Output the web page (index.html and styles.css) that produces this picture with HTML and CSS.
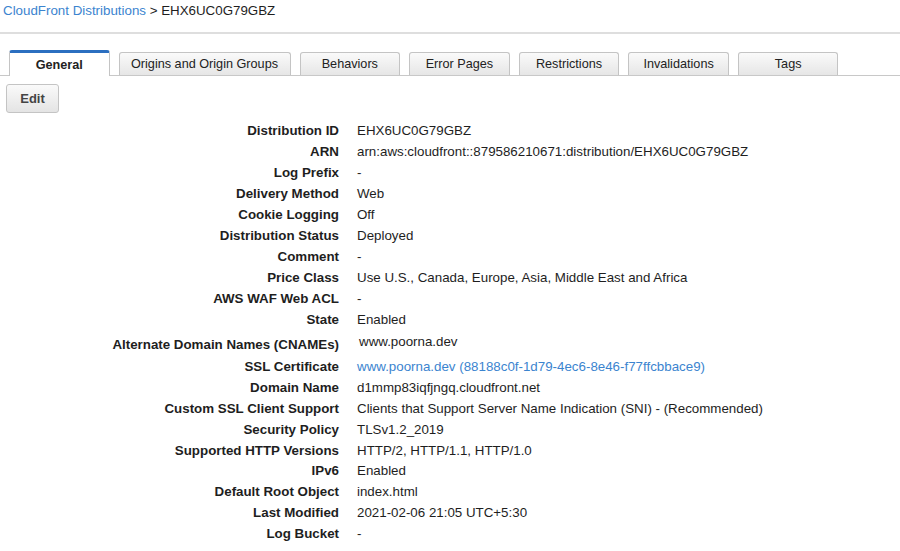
FILE: index.html
```html
<!DOCTYPE html>
<html>
<head>
<meta charset="utf-8">
<link rel="stylesheet" href="styles.css">
</head>
<body>
<div class="crumbs"><a class="link" href="#">CloudFront Distributions</a> &gt; EHX6UC0G79GBZ</div>
<div class="rule"></div>
<div class="tabs">
  <div class="tab active">General</div>
  <div class="tab wide">Origins and Origin Groups</div>
  <div class="tab">Behaviors</div>
  <div class="tab">Error Pages</div>
  <div class="tab">Restrictions</div>
  <div class="tab">Invalidations</div>
  <div class="tab">Tags</div>
</div>
<div class="toolbar"><button class="btn">Edit</button></div>
<div class="props">
  <div class="k">Distribution ID</div><div class="v">EHX6UC0G79GBZ</div>
  <div class="k">ARN</div><div class="v">arn:aws:cloudfront::879586210671:distribution/EHX6UC0G79GBZ</div>
  <div class="k">Log Prefix</div><div class="v">-</div>
  <div class="k">Delivery Method</div><div class="v">Web</div>
  <div class="k">Cookie Logging</div><div class="v">Off</div>
  <div class="k">Distribution Status</div><div class="v">Deployed</div>
  <div class="k">Comment</div><div class="v">-</div>
  <div class="k">Price Class</div><div class="v">Use U.S., Canada, Europe, Asia, Middle East and Africa</div>
  <div class="k">AWS WAF Web ACL</div><div class="v">-</div>
  <div class="k">State</div><div class="v">Enabled</div>
  <div class="k tall-k">Alternate Domain Names (CNAMEs)</div><div class="v tall-v">www.poorna.dev</div>
</div>
<div class="props lower">
  <div class="k">SSL Certificate</div><div class="v"><a class="link" href="#">www.poorna.dev (88188c0f-1d79-4ec6-8e46-f77ffcbbace9)</a></div>
  <div class="k">Domain Name</div><div class="v">d1mmp83iqfjngq.cloudfront.net</div>
  <div class="k">Custom SSL Client Support</div><div class="v">Clients that Support Server Name Indication (SNI) - (Recommended)</div>
  <div class="k">Security Policy</div><div class="v">TLSv1.2_2019</div>
  <div class="k">Supported HTTP Versions</div><div class="v">HTTP/2, HTTP/1.1, HTTP/1.0</div>
  <div class="k">IPv6</div><div class="v">Enabled</div>
  <div class="k">Default Root Object</div><div class="v">index.html</div>
  <div class="k">Last Modified</div><div class="v">2021-02-06 21:05 UTC+5:30</div>
  <div class="k">Log Bucket</div><div class="v">-</div>
</div>
</body>
</html>
```
FILE: styles.css
```css
html, body {
  margin: 0;
  padding: 0;
  background: #fff;
}
body {
  font-family: "Liberation Sans", Arial, sans-serif;
  font-size: 13.33px;
  color: #1e1e1e;
}
.link {
  color: #3b84cf;
  text-decoration: none;
}
.crumbs {
  padding: 2px 0 0 3px;
  height: 20px;
  line-height: 17px;
}
.rule {
  margin-top: 10px;
  border-top: 2px solid #dedede;
}
.tabs {
  margin-top: 16px;
  display: flex;
  align-items: flex-end;
  gap: 9px;
  padding-left: 9px;
  border-bottom: 1px solid #c8c8c8;
  height: 25px;
}
.tab {
  box-sizing: border-box;
  flex: none;
  width: 100.6px;
  height: 23px;
  border: 1px solid #c4c4c4;
  border-bottom: none;
  border-radius: 3px 3px 0 0;
  background: linear-gradient(#fafafa, #e6e6e6);
  font-size: 12.67px;
  line-height: 22px;
  text-align: center;
  color: #222;
}
.tab.wide {
  width: 172px;
}
.tab.active {
  width: 100.5px;
  height: 26px;
  margin-bottom: -1px;
  background: #fff;
  border-top: 3px solid #2b6fc0;
  font-weight: bold;
  line-height: 24px;
}
.toolbar {
  padding: 8px 0 0 6px;
}
.btn {
  box-sizing: border-box;
  width: 53px;
  height: 29px;
  border: 1px solid #c4c4c4;
  border-radius: 3px;
  background: linear-gradient(#fafafa, #e4e4e4);
  font-family: "Liberation Sans", Arial, sans-serif;
  font-size: 13px;
  font-weight: bold;
  color: #444;
  padding: 0;
}
.props {
  margin-top: 7px;
  display: grid;
  grid-template-columns: 339px 1fr;
  column-gap: 18px;
  line-height: 21px;
}
.props.lower {
  margin-top: 1px;
}
.k {
  text-align: right;
  font-weight: bold;
  white-space: nowrap;
}
.k, .v {
  height: 21px;
}
.lower .k, .lower .v {
  height: 20.875px;
  line-height: 20.875px;
}
.props .tall-k {
  height: 22px;
  padding-top: 4px;
}
.props .tall-v {
  height: 25px;
  padding: 1px 0 0 2px;
}
```
